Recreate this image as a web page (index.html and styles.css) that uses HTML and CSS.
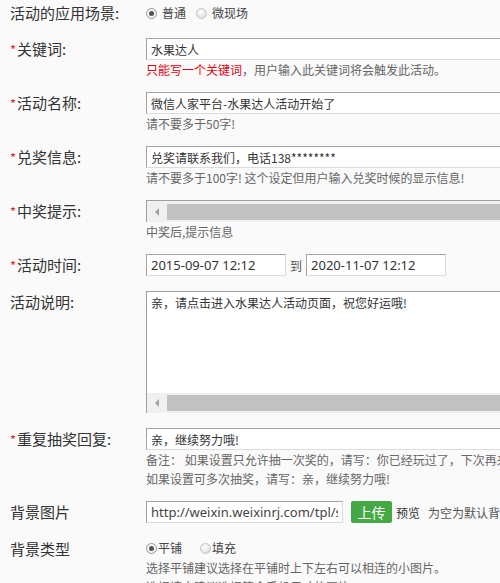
FILE: index.html
```html
<!DOCTYPE html>
<html lang="zh-CN">
<head>
<meta charset="utf-8">
<title>活动设置</title>
<link rel="stylesheet" href="styles.css">
</head>
<body>
<form class="form">
  <div class="row row-radio row-first">
    <div class="label">活动的应用场景:</div>
    <div class="field">
      <div class="radios">
        <span class="radio"><span class="dot checked"></span>普通</span>
        <span class="radio"><span class="dot"></span>微现场</span>
      </div>
    </div>
  </div>

  <div class="row">
    <div class="label"><span class="req">*</span>关键词:</div>
    <div class="field">
      <input class="text wide" type="text" value="水果达人">
      <div class="hint"><span class="warn">只能写一个关键词</span>，用户输入此关键词将会触发此活动。</div>
    </div>
  </div>

  <div class="row">
    <div class="label"><span class="req">*</span>活动名称:</div>
    <div class="field">
      <input class="text wide" type="text" value="微信人家平台-水果达人活动开始了">
      <div class="hint">请不要多于50字!</div>
    </div>
  </div>

  <div class="row">
    <div class="label"><span class="req">*</span>兑奖信息:</div>
    <div class="field">
      <input class="text wide" type="text" value="兑奖请联系我们，电话138********">
      <div class="hint">请不要多于100字! 这个设定但用户输入兑奖时候的显示信息!</div>
    </div>
  </div>

  <div class="row">
    <div class="label"><span class="req">*</span>中奖提示:</div>
    <div class="field">
      <div class="area area-collapsed">
        <div class="hscroll"><span class="arrow"></span><span class="thumb"></span></div>
      </div>
      <div class="hint">中奖后,提示信息</div>
    </div>
  </div>

  <div class="row row-date">
    <div class="label"><span class="req">*</span>活动时间:</div>
    <div class="field dates">
      <input class="text date" type="text" value="2015-09-07 12:12">
      <span class="to">到</span>
      <input class="text date" type="text" value="2020-11-07 12:12">
    </div>
  </div>

  <div class="row row-area">
    <div class="label">活动说明:</div>
    <div class="field">
      <div class="area area-tall">
        <div class="area-text">亲，请点击进入水果达人活动页面，祝您好运哦!</div>
        <div class="hscroll"><span class="arrow"></span><span class="thumb"></span></div>
      </div>
    </div>
  </div>

  <div class="row">
    <div class="label"><span class="req">*</span>重复抽奖回复:</div>
    <div class="field">
      <input class="text wide" type="text" value="亲，继续努力哦!">
      <div class="hint nowrap">备注： 如果设置只允许抽一次奖的，请写：你已经玩过了，下次再来。</div>
      <div class="hint nowrap">如果设置可多次抽奖，请写：亲，继续努力哦!</div>
    </div>
  </div>

  <div class="row row-pic">
    <div class="label">背景图片</div>
    <div class="field upload">
      <input class="text url" type="text" value="http://weixin.weixinrj.com/tpl/static/images/bg.jpg">
      <button class="btn-upload" type="button">上传</button>
      <span class="preview">预览</span>
      <span class="note">为空为默认背景图片</span>
    </div>
  </div>

  <div class="row row-radio">
    <div class="label">背景类型</div>
    <div class="field">
      <div class="radios radios-tight">
        <span class="radio"><span class="dot checked"></span>平铺</span>
        <span class="radio"><span class="dot"></span>填充</span>
      </div>
      <div class="hint nowrap">选择平铺建议选择在平铺时上下左右可以相连的小图片。</div>
      <div class="hint nowrap">选择填充建议选择符合手机尺寸的图片。</div>
    </div>
  </div>
</form>
</body>
</html>
```

FILE: styles.css
```css
html, body {
  margin: 0;
  padding: 0;
  overflow: hidden;
  background: #fafafa;
}

body {
  font-family: "Noto Sans CJK SC", "Noto Sans", "Liberation Sans", sans-serif;
  color: #333;
  font-size: 12px;
}

.form {
  padding: 3px 0 0 10px;
  width: 700px;
}

.row {
  display: flex;
  align-items: flex-start;
  margin-bottom: 13px;
}

.row-first {
  margin-bottom: 15px;
}

.row-date {
  margin-bottom: 14px;
}

.row-area {
  margin-bottom: 15px;
}

.row-pic {
  margin-bottom: 15px;
}

.label {
  width: 136px;
  flex: none;
  font-size: 15px;
  line-height: 22px;
  color: #333;
  white-space: nowrap;
}

.row-radio .label {
  line-height: 20px;
}

.row-radio:not(.row-first) .label {
  line-height: 22px;
}

.req {
  color: #e2242f;
  font-size: 13px;
  margin-right: 1px;
}

.field {
  flex: 1;
  min-width: 0;
}

.text {
  box-sizing: border-box;
  height: 22px;
  margin: 0;
  padding: 0 4px;
  border: 1px solid;
  border-color: #a3a3a3 #dcdcdc #dcdcdc #a3a3a3;
  background: #fff;
  font-family: "Noto Sans CJK SC", "Noto Sans", sans-serif;
  font-size: 12px;
  color: #333;
  outline: none;
  display: block;
}

.wide {
  width: 420px;
}

.hint {
  padding-top: 1px;
  line-height: 18px;
  color: #666;
  font-size: 12px;
}

.nowrap {
  white-space: nowrap;
}

.warn {
  color: #e3000f;
}

/* radios */
.radios {
  display: flex;
  align-items: center;
  height: 20px;
  gap: 10px;
}

.radios-tight {
  gap: 18px;
}

.radio {
  display: inline-flex;
  align-items: center;
  font-size: 12px;
  color: #444;
  line-height: 20px;
}

.dot {
  box-sizing: border-box;
  width: 11px;
  height: 11px;
  border-radius: 50%;
  border: 1px solid #c4c4c4;
  background: radial-gradient(circle at 40% 35%, #ffffff 0%, #e6e6e6 60%, #d2d2d2 100%);
  margin-right: 5px;
  position: relative;
}

.radios-tight .dot {
  margin-right: 1px;
}

.dot.checked {
  border-color: #9a9a9a;
  background: #f4f4f4;
}

.dot.checked::after {
  content: "";
  position: absolute;
  left: 2px;
  top: 2px;
  width: 5px;
  height: 5px;
  border-radius: 50%;
  background: #555;
}

/* pseudo textarea with horizontal scrollbar */
.area {
  box-sizing: border-box;
  width: 420px;
  border-top: 1px solid #9e9e9e;
  border-left: 1px solid #9e9e9e;
  background: #fff;
  display: flex;
  flex-direction: column;
}

.area-collapsed {
  height: 22px;
}

.area-tall {
  height: 122px;
}

.area-text {
  flex: 1;
  padding: 2px 4px 0;
  line-height: 18px;
  font-size: 12px;
  color: #333;
  white-space: nowrap;
}

.hscroll {
  flex: none;
  height: 20px;
  background: #f0f0f0;
  display: flex;
  align-items: center;
}

.area-collapsed .hscroll {
  height: 21px;
}

.arrow {
  width: 20px;
  height: 100%;
  display: flex;
  align-items: center;
  justify-content: center;
  flex: none;
}

.arrow::before {
  content: "";
  width: 0;
  height: 0;
  border-top: 4px solid transparent;
  border-bottom: 4px solid transparent;
  border-right: 4px solid #a3a3a3;
}

.thumb {
  flex: 1;
  height: 16px;
  background: #c1c1c1;
}

/* dates */
.dates {
  display: flex;
  align-items: center;
}

.date {
  width: 140px;
  font-size: 13px;
  font-family: "Noto Sans", "Open Sans", sans-serif;
}

.to {
  font-size: 12px;
  color: #555;
  margin: 0 4px 0 4px;
}

/* upload */
.upload {
  display: flex;
  align-items: center;
  white-space: nowrap;
}

.url {
  width: 197px;
  font-size: 13px;
  font-family: "Noto Sans", "Open Sans", sans-serif;
  color: #444;
}

.btn-upload {
  margin: 0 4px 0 8px;
  width: 41px;
  height: 22px;
  border: none;
  border-radius: 2px;
  background: #44a944;
  color: #fff;
  font-family: "Noto Sans CJK SC", sans-serif;
  font-size: 14px;
  line-height: 22px;
  padding: 0;
}

.preview {
  font-size: 12px;
  color: #333;
  margin-right: 8px;
}

.note {
  font-size: 12px;
  color: #555;
}
```
